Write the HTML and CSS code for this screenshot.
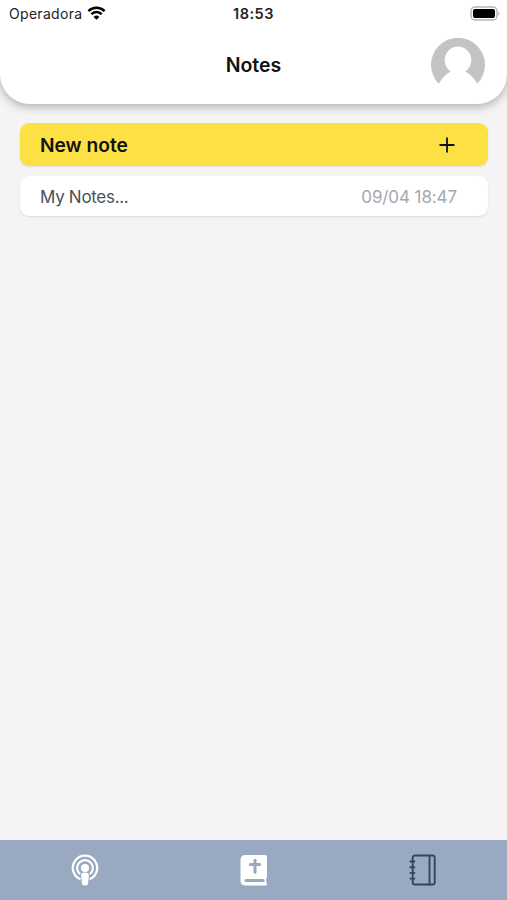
FILE: index.html
```html
<!DOCTYPE html>
<html lang="en">
<head>
    <meta charset="UTF-8">
    <meta name="viewport" content="width=device-width, initial-scale=1.0">
    <title>Notes</title>
    <link rel="stylesheet" href="styles.css">
</head>
<body>
    <header class="header">
        <!-- Status bar -->
        <div class="status-bar">
            <div class="carrier">
                <span class="carrier-name">Operadora</span>
                <svg class="wifi" width="19" height="14" viewBox="0 0 18 14">
                    <path d="M.9 5.100a11.400 11.400 0 0 1 16.200 0M3.800 8.200a7.300 7.300 0 0 1 10.400 0" fill="none" stroke="#000" stroke-width="2.4"/>
                    <path d="M9 13.700L6.100 10.900a4.100 4.100 0 0 1 5.800 0z" fill="#000"/>
                </svg>
            </div>
            <span class="time">18:53</span>
            <svg class="battery" width="31" height="15" viewBox="0 0 31 15">
                <rect x="1" y="1" width="26" height="13" rx="4" fill="#fff" stroke="#b5b5b5" stroke-width="1.4"/>
                <rect x="3" y="3" width="22" height="9" rx="2" fill="#000"/>
                <path d="M28.3 5.2q2.4 2.3 0 4.6z" fill="#a5a5a5"/>
            </svg>
        </div>

        <div class="title-bar">
            <h1>Notes</h1>
            <svg class="avatar" width="54" height="54" viewBox="0 0 54 54">
                <path d="M7.8 45.8A27 27 0 1 1 46.2 45.8Q41.5 37.5 34.2 33.6A13.3 13.6 0 1 0 19.8 33.6Q12.5 37.5 7.8 45.8z" fill="#c4c4c4"/>
            </svg>
        </div>
    </header>

    <main class="notes">
        <button class="note new-note">
            <span>New note</span>
            <svg width="16" height="16" viewBox="0 0 16 16">
                <path d="M8 1.2v13.6M1.2 8h13.6" stroke="#111" stroke-width="1.8" stroke-linecap="round"/>
            </svg>
        </button>
        <div class="note">
            <span class="note-title">My Notes...</span>
            <span class="note-date">09/04 18:47</span>
        </div>
    </main>

    <nav class="tabs">
        <a class="tab">
            <svg width="28" height="32" viewBox="0 0 28 32">
                <g fill="none" stroke="#fff" stroke-width="2.2">
                    <path d="M9.4 25.2A12.2 12.2 0 1 1 18.6 25.2"/>
                    <path d="M9.1 20.2A7.9 7.9 0 1 1 18.9 20.2"/>
                </g>
                <circle cx="14" cy="14" r="4.1" fill="#fff"/>
                <path d="M14 18.6c2.9 0 4.1 1.2 3.9 3.3l-.8 7.5q-.3 2.2-3.100 2.200t-3.100-2.200l-.8-7.500c-.2-2.100 1-3.300 3.900-3.300z" fill="#fff"/>
            </svg>
        </a>
        <a class="tab">
            <svg width="28" height="32" viewBox="0 0 28 32">
                <path d="M5.5 1H25q2 0 2 2V23q0 1-.8 1.500V28.500q.8.500.8 1.500 0 1.500-1.500 1.500H5.500Q.5 31.500.5 26.500V6Q.5 1 5.500 1z" fill="#fff"/>
                <path d="M15 6.300v12M10.300 10.400h9.400" stroke="#98a9c1" stroke-width="3" stroke-linecap="round"/>
                <path d="M6 26.400h17.200" stroke="#98a9c1" stroke-width="3" stroke-linecap="round"/>
            </svg>
        </a>
        <a class="tab">
            <svg width="28" height="32" viewBox="0 0 28 32">
                <g fill="none" stroke="#33455f" stroke-width="1.9" stroke-linecap="round">
                    <rect x="3.7" y="1.500" width="22" height="29" rx="2"/>
                    <path d="M20.500 1.500v29M1.400 7.500h4M1.400 13.200h4M1.400 18.900h4M1.400 24.600h4"/>
                </g>
            </svg>
        </a>
    </nav>
</body>
</html>
```
FILE: styles.css
```css
* {
    margin: 0;
    padding: 0;
    box-sizing: border-box;
    font-family: 'Inter', sans-serif;
}

body {
    background: #f4f4f4;
    display: flex;
    flex-direction: column;
    height: 100vh;
    overflow: hidden;
}

.header {
    height: 104px;
    background: #fff;
    border-radius: 0 0 30px 30px;
    box-shadow: 0 3px 10px rgba(0, 0, 0, 0.28);
}

.status-bar {
    display: grid;
    grid-template-columns: 1fr auto 1fr;
    align-items: center;
    height: 27px;
    padding: 0 6px 0 9px;
    color: #222;
}

.carrier {
    display: flex;
    align-items: center;
    gap: 5px;
}

.carrier-name {
    font-size: 14px;
    letter-spacing: 0.3px;
}

.wifi {
    margin-bottom: 1px;
}

.time {
    margin-right: 3px;
    font-size: 14.5px;
    font-weight: 600;
    letter-spacing: 0.5px;
}

.battery {
    justify-self: end;
}

.title-bar {
    display: grid;
    grid-template-columns: 1fr auto 1fr;
    align-items: center;
    height: 54px;
    margin-top: 11px;
    padding: 0 22px;
}

.title-bar h1 {
    grid-column: 2;
    font-size: 19.5px;
    font-weight: 600;
    color: #111;
}

.avatar {
    justify-self: end;
}

.notes {
    flex: 1;
    display: flex;
    flex-direction: column;
    gap: 10px;
    padding: 19px 19px 0 20px;
}

.note {
    display: flex;
    justify-content: space-between;
    align-items: center;
    height: 40px;
    padding: 1px 31px 0 20px;
    background: #fff;
    border-radius: 9px;
    box-shadow: 0 1px 2px rgba(0, 0, 0, 0.1);
    font-size: 17px;
}

.new-note {
    height: 43px;
    padding: 1px 33px 0 20px;
    border: none;
    background: #fce044;
    color: #111;
    font-size: 19.2px;
    font-weight: 600;
}

.note-title {
    color: #4b4f59;
    letter-spacing: -0.3px;
}

.note-date {
    color: #a6a8ae;
    letter-spacing: -0.1px;
}

.tabs {
    display: grid;
    grid-template-columns: repeat(3, 1fr);
    height: 60px;
    background: #98a9c1;
}

.tab {
    display: flex;
    justify-content: center;
    align-items: center;
}
```
